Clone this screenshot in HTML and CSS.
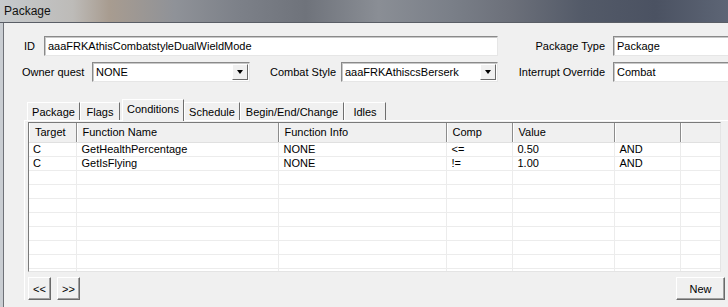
FILE: index.html
```html
<!DOCTYPE html>
<html lang="en">
<head>
    <meta charset="UTF-8">
    <meta name="viewport" content="width=device-width, initial-scale=1.0">
    <title>Package</title>
    <link rel="stylesheet" href="styles.css">
</head>
<body>

    <div class="titlebar"><span>Package</span></div>

    <div class="client">
        <div class="form-row row-top">
            <label class="lbl lbl-id">ID</label>
            <div class="edit edit-id">aaaFRKAthisCombatstyleDualWieldMode</div>
            <label class="lbl lbl-right">Package Type</label>
            <div class="edit edit-right">Package</div>
        </div>

        <div class="form-row row-second">
            <label class="lbl lbl-owner">Owner quest</label>
            <div class="combo combo-owner"><span>NONE</span><i class="drop"></i></div>
            <label class="lbl lbl-style">Combat Style</label>
            <div class="combo combo-style"><span>aaaFRKAthiscsBerserk</span><i class="drop"></i></div>
            <label class="lbl lbl-right lbl-interrupt">Interrupt Override</label>
            <div class="edit edit-right">Combat</div>
        </div>

        <div class="tabs">
            <div class="tab tab-package">Package</div>
            <div class="tab tab-flags">Flags</div>
            <div class="tab tab-conditions active">Conditions</div>
            <div class="tab tab-schedule">Schedule</div>
            <div class="tab tab-begin">Begin/End/Change</div>
            <div class="tab tab-idles">Idles</div>
        </div>

        <div class="tab-panel">
            <div class="list">
                <table>
                    <colgroup>
                        <col style="width:47px"><col style="width:202px"><col style="width:168px">
                        <col style="width:66px"><col style="width:102px"><col style="width:66px"><col style="width:40px">
                    </colgroup>
                    <thead>
                        <tr>
                            <th>Target</th><th>Function Name</th><th>Function Info</th>
                            <th>Comp</th><th>Value</th><th></th><th></th>
                        </tr>
                    </thead>
                    <tbody>
                        <tr><td>C</td><td>GetHealthPercentage</td><td>NONE</td><td>&lt;=</td><td>0.50</td><td>AND</td><td></td></tr>
                        <tr><td>C</td><td>GetIsFlying</td><td>NONE</td><td>!=</td><td>1.00</td><td>AND</td><td></td></tr>
                        <tr><td></td><td></td><td></td><td></td><td></td><td></td><td></td></tr>
                        <tr><td></td><td></td><td></td><td></td><td></td><td></td><td></td></tr>
                        <tr><td></td><td></td><td></td><td></td><td></td><td></td><td></td></tr>
                        <tr><td></td><td></td><td></td><td></td><td></td><td></td><td></td></tr>
                        <tr><td></td><td></td><td></td><td></td><td></td><td></td><td></td></tr>
                        <tr><td></td><td></td><td></td><td></td><td></td><td></td><td></td></tr>
                        <tr><td></td><td></td><td></td><td></td><td></td><td></td><td></td></tr>
                        <tr><td></td><td></td><td></td><td></td><td></td><td></td><td></td></tr>
                    </tbody>
                </table>
            </div>

            <div class="buttons">
                <button class="btn btn-nav">&lt;&lt;</button>
                <button class="btn btn-nav">&gt;&gt;</button>
                <button class="btn btn-new">New</button>
            </div>
        </div>
    </div>

</body>
</html>
```

FILE: styles.css
```css
* {
    margin: 0;
    padding: 0;
    box-sizing: border-box;
    font-family: 'Liberation Sans', Arial, sans-serif;
}

body {
    width: 728px;
    height: 307px;
    overflow: hidden;
    background: #c9cdd2;
    font-size: 11px;
    color: #000;
}

.titlebar {
    height: 23px;
    padding-left: 4px;
    display: flex;
    align-items: center;
    font-size: 12px;
    color: #111;
    border-bottom: 1px solid #5a5e66;
    background: linear-gradient(90deg, #c6cacd 0%, #bdbbb8 10%, #a89c90 15%, #8f9298 24%, #7c8088 33%,
                #6f737b 42%, #8a8e95 52%, #7a7f88 62%, #6c707a 70%, #535a68 80%, #4b5262 90%, #5d6575 100%);
}

.client {
    margin-left: 3px;
    height: 284px;
    background: #f0f0f0;
    border-left: 1px solid #6e7177;
    padding-top: 13px;
}

/* top form */
.form-row {
    display: flex;
    align-items: center;
    height: 20px;
}

.form-row > * {
    flex-shrink: 0;
}

.row-top {
    padding-left: 20px;
}

.row-second {
    margin-top: 6px;
    padding-left: 18px;
}

.lbl {
    white-space: nowrap;
}

.lbl-id {
    width: 20px;
}

.lbl-owner {
    width: 70px;
}

.lbl-style {
    margin-left: 20px;
    width: 71px;
}

.lbl-right {
    width: 115px;
    text-align: right;
    padding-right: 8px;
}

.edit, .combo {
    height: 20px;
    background: #fff;
    border: 1px solid;
    border-color: #8a8a8a #e6e6e6 #e6e6e6 #8a8a8a;
    box-shadow: inset 1px 1px 0 #c8c8c8;
    padding: 0 3px;
    display: flex;
    align-items: center;
    white-space: nowrap;
    overflow: hidden;
}

.edit-id {
    width: 454px;
}

.edit-right {
    width: 130px;
}

.combo {
    justify-content: space-between;
    padding-right: 1px;
}

.combo-owner {
    width: 158px;
}

.combo-style {
    width: 157px;
}

.drop {
    width: 16px;
    height: 16px;
    background: #f0f0f0;
    border: 1px solid;
    border-color: #fff #6a6a6a #6a6a6a #fff;
    position: relative;
}

.drop::after {
    content: "";
    position: absolute;
    left: 4px;
    top: 5px;
    border-left: 3.5px solid transparent;
    border-right: 3.5px solid transparent;
    border-top: 4px solid #000;
}

/* tabs */
.tabs {
    display: flex;
    align-items: flex-end;
    margin-top: 17px;
    margin-left: 23px;
    height: 21px;
    position: relative;
    z-index: 1;
}

.tab {
    height: 18px;
    display: flex;
    align-items: center;
    justify-content: center;
    border-top: 1px solid #fff;
    border-left: 1px solid #fff;
    border-right: 1px solid #6e6e6e;
    background: #f0f0f0;
    white-space: nowrap;
}

.tab-package { width: 53px; }
.tab-flags { width: 40px; }
.tab-conditions { width: 62px; }
.tab-schedule { width: 56px; }
.tab-begin { width: 104px; }
.tab-idles { width: 42px; }

.tab.active {
    height: 22px;
    padding-bottom: 3px;
    margin: 0 0 -1px 2px;
}

.tab-panel {
    margin-left: 20px;
    border-top: 1px solid #fff;
    border-left: 1px solid #fff;
    padding: 1px 0 0 3px;
}

/* list view */
.list {
    width: 693px;
    height: 150px;
    background: #fff;
    border: 1px solid;
    border-color: #7a7a7a #e4e4e4 #e4e4e4 #7a7a7a;
    overflow: hidden;
}

table {
    border-collapse: collapse;
    table-layout: fixed;
    width: 691px;
}

th {
    height: 19px;
    font-weight: normal;
    text-align: left;
    padding-left: 6px;
    background: #f0f0f0;
    border-right: 1px solid #8c8c8c;
    border-bottom: 1px solid #e0e0e0;
    box-shadow: inset 1px 0 0 #fff;
    white-space: nowrap;
}

td {
    height: 14px;
    line-height: 13px;
    padding-left: 5px;
    border-right: 1px solid #ececec;
    border-bottom: 1px solid #ececec;
    white-space: nowrap;
}

td:first-child {
    padding-left: 4px;
}

/* buttons */
.buttons {
    display: flex;
    margin-top: 5px;
    width: 697px;
}

.btn {
    height: 23px;
    background: #f0f0f0;
    border: 1px solid;
    border-color: #fff #6a6a6a #6a6a6a #fff;
    box-shadow: inset -1px -1px 0 #a0a0a0;
    font-size: 11px;
    color: #000;
}

.btn-nav {
    width: 23px;
    margin-right: 6px;
}

.btn-new {
    width: 49px;
    margin-left: auto;
}
```
